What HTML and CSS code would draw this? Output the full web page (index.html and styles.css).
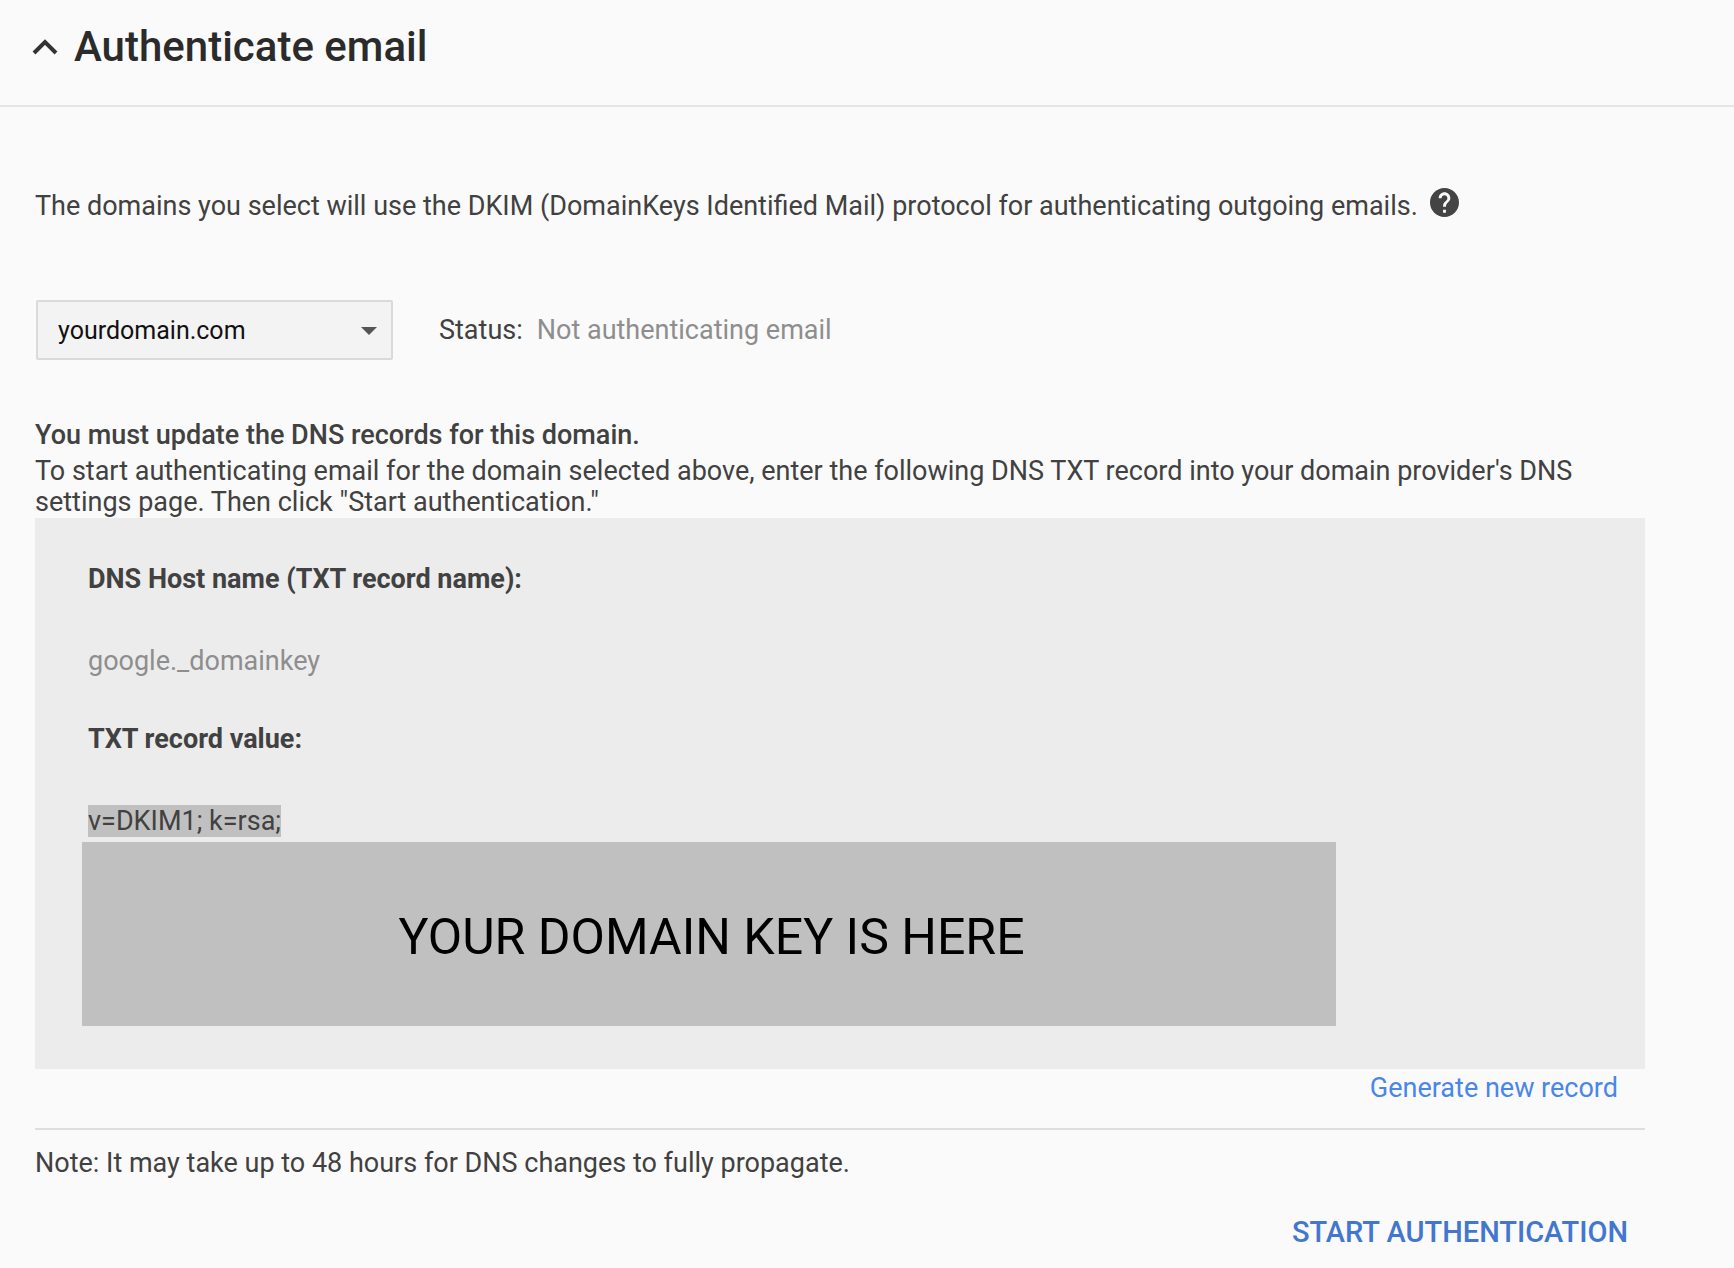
FILE: index.html
```html
<!DOCTYPE html>
<html lang="en">
<head>
<meta charset="utf-8">
<title>Authenticate email</title>
<link rel="stylesheet" href="styles.css">
</head>
<body>
<section class="panel">
  <header class="panel-header">
    <button class="collapse" type="button" aria-label="Collapse section">
      <svg viewBox="0 0 26 16" width="26" height="16" aria-hidden="true"><path d="M2 14 13 3 24 14" fill="none" stroke="currentColor" stroke-width="4"/></svg>
    </button>
    <h1 class="panel-title">Authenticate email</h1>
  </header>
  <div class="panel-body">
    <div class="intro">
      <p>The domains you select will use the DKIM (DomainKeys Identified Mail) protocol for authenticating outgoing emails.</p>
      <button class="help" type="button" aria-label="Help">
        <svg viewBox="2 2 20 20" width="29" height="29" aria-hidden="true"><path fill="currentColor" d="M12 2C6.48 2 2 6.48 2 12s4.480 10 10 10 10-4.480 10-10S17.520 2 12 2zm1 17h-2v-2h2v2zm2.070-7.750l-.9.920C13.450 12.900 13 13.500 13 15h-2v-.5c0-1.100.45-2.100 1.170-2.830l1.240-1.260c.37-.36.59-.86.59-1.410 0-1.100-.9-2-2-2s-2 .9-2 2H8c0-2.210 1.790-4 4-4s4 1.790 4 4c0 .88-.36 1.680-.93 2.250z"/></svg>
      </button>
    </div>
    <div class="domain-row">
      <div class="select-wrap">
        <select class="domain-select" aria-label="Domain"><option>yourdomain.com</option></select>
        <svg class="caret" viewBox="0 0 16 8" width="16" height="8" aria-hidden="true"><path d="M0 0h16L8 8z" fill="currentColor"/></svg>
      </div>
      <p class="status"><span>Status:</span><span class="muted">Not authenticating email</span></p>
    </div>
    <h2 class="notice-title">You must update the DNS records for this domain.</h2>
    <p>To start authenticating email for the domain selected above, enter the following DNS TXT record into your domain provider's DNS settings page. Then click "Start authentication."</p>
    <div class="record">
      <h3 class="record-label">DNS Host name (TXT record name):</h3>
      <p class="record-name muted">google._domainkey</p>
      <h3 class="record-label">TXT record value:</h3>
      <p class="record-value"><mark>v=DKIM1; k=rsa;</mark></p>
      <div class="domain-key">YOUR DOMAIN KEY IS HERE</div>
    </div>
    <div class="generate"><a href="#">Generate new record</a></div>
    <p class="note">Note: It may take up to 48 hours for DNS changes to fully propagate.</p>
    <div class="actions"><button class="start" type="button">START AUTHENTICATION</button></div>
  </div>
</section>
</body>
</html>
```

FILE: styles.css
```css
* {
  box-sizing: border-box;
}

body {
  margin: 0;
  background: #fafafa;
  color: #414141;
  font: 400 27px/31px Roboto, sans-serif;
}

h1, h2, h3, p {
  margin: 0;
}

button {
  padding: 0;
  border: 0;
  background: none;
  font-family: inherit;
  cursor: pointer;
}

.muted {
  color: #8e8e8e;
}

.panel-header {
  display: flex;
  align-items: center;
  gap: 16px;
  padding: 23px 32px 34px;
  border-bottom: 2px solid #e6e6e6;
}

.collapse {
  display: flex;
  color: #333;
}

.panel-title {
  color: #2b2b2b;
  font-size: 42px;
  font-weight: 500;
  line-height: 48px;
}

.panel-body {
  padding: 81px 89px 18px 35px;
}

.intro {
  display: flex;
  align-items: center;
  gap: 12px;
}

.help {
  display: flex;
  padding-bottom: 8px;
  color: #444;
}

.domain-row {
  display: flex;
  align-items: center;
  gap: 46px;
  margin: 75px 0 60px 1px;
}

.select-wrap {
  position: relative;
  flex: 0 0 357px;
}

.domain-select {
  display: block;
  width: 100%;
  height: 60px;
  padding: 0 20px;
  border: 2px solid #d9dbdb;
  border-radius: 2px;
  background: #f3f3f3;
  color: #111;
  font: inherit;
  font-size: 25px;
  appearance: none;
}

.caret {
  position: absolute;
  top: 27px;
  right: 16px;
  color: #555;
  pointer-events: none;
}

.status {
  display: flex;
  gap: 14px;
}

.notice-title {
  margin-bottom: 5px;
  font-size: 27px;
  font-weight: 500;
  line-height: 31px;
}

.record {
  padding: 46px 53px 43px;
  background: #ececec;
}

.record-label {
  font-size: 27px;
  font-weight: 700;
  line-height: 31px;
}

.record-name {
  margin: 51px 0 47px;
}

.record-value {
  margin: 51px 0 5px;
}

.record-value mark {
  background: #c0c0c0;
  color: inherit;
}

.domain-key {
  max-width: 1254px;
  margin: 0 0 0 -6px;
  padding: 65px 0 59px 5px;
  background: #c0c0c0;
  color: #000;
  font-size: 50px;
  line-height: 60px;
  text-align: center;
}

.generate {
  padding: 4px 27px 24px;
  border-bottom: 2px solid #dedede;
  text-align: right;
}

.generate a {
  color: #4a86e8;
  text-decoration: none;
}

.note {
  margin: 18px 0 36px;
}

.actions {
  display: flex;
  justify-content: flex-end;
  padding-right: 17px;
}

.start {
  color: #4377cf;
  font-size: 29px;
  font-weight: 500;
  line-height: 34px;
}
```
